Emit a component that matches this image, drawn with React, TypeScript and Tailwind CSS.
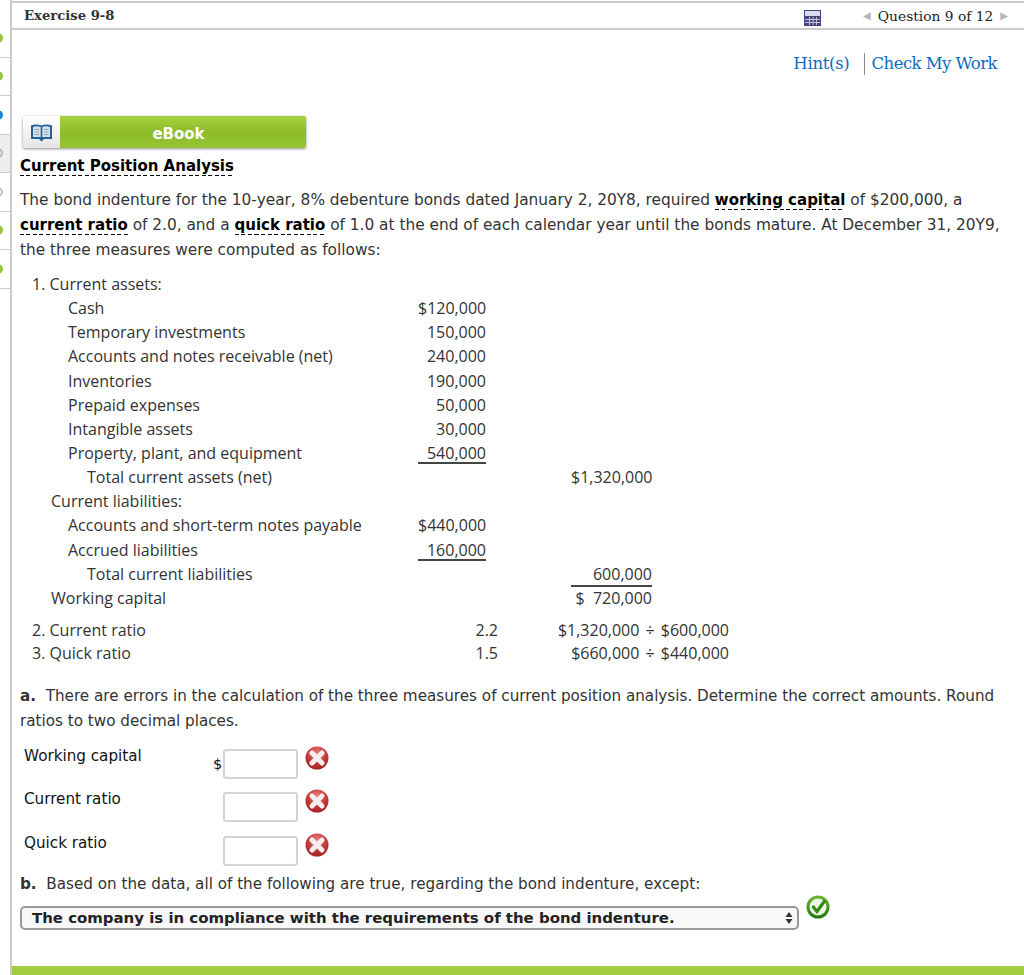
import React from "react";

const serif = "font-['DejaVu_Serif',serif]";
const body = "font-['DejaVu_Sans',sans-serif]";
const book = "font-['Open_Sans',sans-serif]";
const dashes =
  "bg-[repeating-linear-gradient(90deg,#000_0_4px,transparent_4px_6.500px)] bg-[length:100%_1.500px] bg-bottom bg-no-repeat pb-[1px]";

const sideRows = [
  { dot: "bg-[#9bc53d]" },
  { dot: "bg-[#9bc53d]" },
  { dot: "bg-[#1b87d6]" },
  { dot: "bg-[#eee] border-2 border-[#b5b5b5]", active: true },
  { dot: "bg-white border-2 border-[#c4c4c4]" },
  { dot: "bg-[#9bc53d]" },
  { dot: "bg-[#9bc53d]" },
];

const assetRows = [
  { label: "1. Current assets:", pad: "pl-0" },
  { label: "Cash", pad: "pl-[36px]", a: "$120,000" },
  { label: "Temporary investments", pad: "pl-[36px]", a: "150,000" },
  { label: "Accounts and notes receivable (net)", pad: "pl-[36px]", a: "240,000" },
  { label: "Inventories", pad: "pl-[36px]", a: "190,000" },
  { label: "Prepaid expenses", pad: "pl-[36px]", a: "50,000" },
  { label: "Intangible assets", pad: "pl-[36px]", a: "30,000" },
  { label: "Property, plant, and equipment", pad: "pl-[36px]", a: "540,000", line: true },
  { label: "Total current assets (net)", pad: "pl-[55px]", b: "$1,320,000" },
  { label: "Current liabilities:", pad: "pl-[19px]" },
  { label: "Accounts and short-term notes payable", pad: "pl-[36px]", a: "$440,000" },
  { label: "Accrued liabilities", pad: "pl-[36px]", a: "160,000", line: true },
  { label: "Total current liabilities", pad: "pl-[55px]", b: "600,000", lineB: true },
  { label: "Working capital", pad: "pl-[19px]", b: "$\u00a0\u00a0720,000" },
];

const answers = [
  { label: "Working capital", dollar: true },
  { label: "Current ratio" },
  { label: "Quick ratio" },
];

function Term({ children }: { children: React.ReactNode }) {
  return <b className={`text-[15px] font-bold text-black ${dashes}`}>{children}</b>;
}

function BookIcon() {
  return (
    <svg width="21" height="19" viewBox="0 0 21 19">
      <path d="M0 2.500Q5.500 .5 10.500 2.500Q15.500 .5 21 2.500V16H13L10.500 18.500L8 16H0z" fill="#235f98" />
      <path d="M2 4Q6 2.500 9.700 4V14H2zM11.300 4Q15 2.500 19 4V14H11.300z" fill="#d5e2ea" />
      <path d="M3.500 6.500h4.500M3.500 9h4.500M3.500 11.500h4.500M13 6.500h4.500M13 9h4.500M13 11.500h4.500" stroke="#8fa7b8" strokeWidth="1" />
    </svg>
  );
}

function CalcIcon() {
  return (
    <svg width="17" height="16" viewBox="0 0 17 16">
      <rect width="17" height="16" fill="#47437f" />
      <rect x="1" y="1" width="15" height="5" fill="#d9dcea" />
      <path d="M1 9.500h15M1 12.500h15M5.500 7v8M9 7v8M12.500 7v8" stroke="#c3c5dd" strokeWidth="1" />
    </svg>
  );
}

function CrossIcon() {
  return (
    <svg width="24" height="24" viewBox="0 0 24 24">
      <defs>
        <radialGradient id="redBall" cx="50%" cy="30%" r="75%">
          <stop offset="0%" stopColor="#e8817f" />
          <stop offset="55%" stopColor="#c8383a" />
          <stop offset="100%" stopColor="#9c1d20" />
        </radialGradient>
      </defs>
      <circle cx="12" cy="12" r="11.500" fill="url(#redBall)" />
      <path d="M7 7l10 10M17 7L7 17" stroke="#f5eeee" strokeWidth="5" strokeLinecap="round" />
    </svg>
  );
}

function CheckIcon() {
  return (
    <svg width="24" height="24" viewBox="0 0 24 24">
      <defs>
        <linearGradient id="greenRing" x1="0" y1="0" x2="0" y2="1">
          <stop offset="0%" stopColor="#6fb52e" />
          <stop offset="100%" stopColor="#1f7a0e" />
        </linearGradient>
      </defs>
      <circle cx="12" cy="12" r="11.500" fill="url(#greenRing)" />
      <circle cx="12" cy="12" r="8.500" fill="#eef6e6" />
      <path d="M6.500 11l4.500 5.500 8-11" fill="none" stroke="#2f8a12" strokeWidth="3.200" />
    </svg>
  );
}

export default function App() {
  return (
    <div className="flex h-[975px] w-[1024px] overflow-hidden bg-white text-[#333]">
      {/* question list on the left */}
      <aside className="flex w-[10px] shrink-0 flex-col pt-[19px]">
        {sideRows.map((row, i) => (
          <div
            key={i}
            className={`flex h-[38.500px] items-center border-b border-[#ccc] ${row.active ? "bg-[#eee]" : ""}`}
          >
            <span className={`-ml-[7px] h-[10px] w-[10px] shrink-0 rounded-full ${row.dot}`} />
          </div>
        ))}
      </aside>

      <main className="flex min-w-0 flex-1 flex-col border-l-2 border-[#ccc]">
        <header
          className={`mt-[1px] flex h-[29px] items-center border-y-2 border-t-[#ccc] border-b-[#ccc] pl-[12px] pr-[16px] ${serif}`}
        >
          <h1 className="text-[13.200px] font-bold text-[#333]">Exercise 9-8</h1>
          <div className="ml-auto mr-[42px] pt-[4px]">
            <CalcIcon />
          </div>
          <span className="mr-[7px] text-[10px] text-[#b5b5b5]">◀</span>
          <span className="pt-[2px] text-[13.800px] text-[#222]">Question 9 of 12</span>
          <span className="ml-[7px] text-[10px] text-[#b5b5b5]">▶</span>
        </header>

        <div className={`flex justify-end pt-[23px] pr-[27px] text-[16.500px] leading-[22px] text-[#0b6cc0] ${serif}`}>
          <span className="tracking-[-0.3px]">Hint(s)</span>
          <span className="ml-[14px] mr-[7px] w-px bg-[#888]" />
          <span className="tracking-[-0.55px]">Check My Work</span>
        </div>

        <div className="mt-[41px] ml-[11px] flex h-[32px] w-[283px] rounded-[2px] shadow-[0_1px_3px_rgba(0,0,0,0.45)]">
          <div className="flex w-[37px] items-center justify-center bg-gradient-to-b from-white to-[#e6e6e6]">
            <BookIcon />
          </div>
          <div
            className={`flex flex-1 items-center justify-center rounded-r-[2px] bg-gradient-to-b from-[#a5d13f] via-[#8cbb2a] to-[#95c533] pr-[9px] pt-[4px] text-[15px] font-bold text-white ${body}`}
          >
            eBook
          </div>
        </div>

        <div className={`pl-[8px] pr-[20px] text-[15.350px] ${body}`}>
          <h2 className="mt-[7px] h-[22px] text-[15px] font-bold leading-[22px] text-black">
            <span className={dashes}>Current Position Analysis</span>
          </h2>
          <p className="mt-[11px] leading-[25px]">
            The bond indenture for the 10-year, 8% debenture bonds dated January 2, 20Y8, required{" "}
            <Term>working capital</Term> of $200,000, a <Term>current ratio</Term> of 2.0, and a{" "}
            <Term>quick ratio</Term> of 1.0 at the end of each calendar year until the bonds mature. At December 31,
            20Y9, the three measures were computed as follows:
          </p>
        </div>

        <div className={`mt-[9px] ml-[20px] text-[16px] leading-[24.150px] text-[#333] ${book}`}>
          {assetRows.map((row) => (
            <div key={row.label} className="flex h-[24.150px]">
              <div className={`w-[386px] shrink-0 whitespace-nowrap ${row.pad}`}>{row.label}</div>
              <div className={`w-[68px] shrink-0 text-right ${row.line ? "h-[23px] border-b-2 border-[#444]" : ""}`}>
                {row.a}
              </div>
              <div className={`ml-[85px] w-[81px] shrink-0 whitespace-nowrap text-right ${row.lineB ? "h-[25px] border-b-2 border-[#444]" : ""}`}>
                {row.b}
              </div>
            </div>
          ))}
          <div className="mt-[8px] flex h-[23.500px]">
            <div className="w-[354px] shrink-0">2. Current ratio</div>
            <div className="w-[112px] shrink-0 text-right">2.2</div>
            <div className="w-[231px] shrink-0 text-right [word-spacing:2px]">$1,320,000 ÷ $600,000</div>
          </div>
          <div className="flex h-[23.500px]">
            <div className="w-[354px] shrink-0">3. Quick ratio</div>
            <div className="w-[112px] shrink-0 text-right">1.5</div>
            <div className="w-[231px] shrink-0 text-right [word-spacing:2px]">$660,000 ÷ $440,000</div>
          </div>
        </div>

        <div className={`pl-[8px] pr-[20px] text-[15.200px] ${body}`}>
          <p className="mt-[19px] leading-[25px]">
            <b className="font-bold">a.</b>&nbsp; There are errors in the calculation of the three measures of current
            position analysis. Determine the correct amounts. Round ratios to two decimal places.
          </p>

          <div className="mt-[15px] flex flex-col gap-[13.500px] pl-[4px] text-[#111]">
            {answers.map((row) => (
              <div key={row.label} className="flex h-[30px] items-start">
                <span className="-mt-[3px] w-[189px] shrink-0 leading-[20px]">{row.label}</span>
                <span className="w-[10px] shrink-0 pt-[5px] text-[14.500px] leading-[20px]">{row.dollar ? "$" : ""}</span>
                <span className="h-[30px] w-[75px] shrink-0 rounded-[3px] border-2 border-[#d4d4d4] bg-white" />
                <span className="-mt-[3px] ml-[7px]">
                  <CrossIcon />
                </span>
              </div>
            ))}
          </div>

          <p className="mt-[6px] leading-[25px]">
            <b className="font-bold">b.</b>&nbsp; Based on the data, all of the following are true, regarding the bond
            indenture, except:
          </p>

          <div className="mt-[9px] flex items-start">
            <div className="flex h-[24px] w-[779px] items-center rounded-[5px] border-2 border-[#999] bg-[#f8f8f8] pl-[10px] pr-[4px] text-[14.950px] font-bold text-[#222]">
              The company is in compliance with the requirements of the bond indenture.
              <svg className="ml-auto" width="8" height="14" viewBox="0 0 8 14">
                <path d="M4 1l3.500 5h-7zM4 13L.5 8h7z" fill="#333" />
              </svg>
            </div>
            <span className="-mt-[11px] ml-[7px]">
              <CheckIcon />
            </span>
          </div>
        </div>

        <div className="mt-auto h-[9px] shrink-0 bg-[#a0cd3e]" />
      </main>
    </div>
  );
}
